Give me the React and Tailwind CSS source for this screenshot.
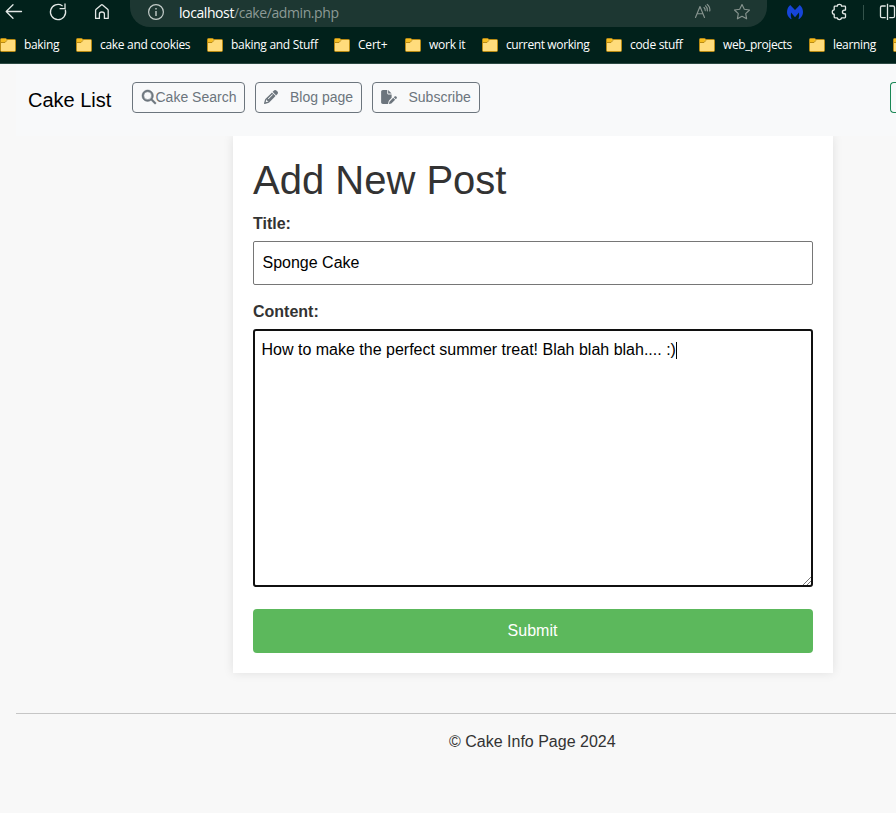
import { FaFilePen, FaMagnifyingGlass, FaPencil } from "react-icons/fa6";

const bookmarks = [
  { label: "baking", width: "w-[76px]", tracking: "tracking-[-0.35px]" },
  { label: "cake and cookies", width: "w-[131px]", tracking: "tracking-[-0.3px]" },
  { label: "baking and Stuff", width: "w-[127px]", tracking: "tracking-[-0.28px]" },
  { label: "Cert+", width: "w-[71px]", tracking: "tracking-[-0.2px]" },
  { label: "work it", width: "w-[77px]", tracking: "tracking-[-0.25px]" },
  { label: "current working", width: "w-[124px]", tracking: "tracking-[-0.38px]" },
  { label: "code stuff", width: "w-[93px]", tracking: "tracking-[-0.3px]" },
  { label: "web_projects", width: "w-[110px]", tracking: "tracking-[-0.4px]" },
  { label: "learning", width: "w-[84px]", tracking: "tracking-[-0.35px]" },
  { label: "", width: "w-[40px]", tracking: "tracking-normal" },
];

function Folder() {
  return (
    <svg className="h-[14px] w-4 shrink-0" viewBox="0 0 16 14" fill="none">
      <path d="M.5 12.5V1.5Q.5.5 1.5.5H5.5L7 1.5H14.5Q15.5 1.5 15.5 2.5V12.5Q15.5 13.5 14.5 13.5H1.5Q.5 13.5.5 12.5Z" fill="#ffdc7c" stroke="#b98a13" />
      <path d="M1 1H5.4L6.6 2 5 4H1Z" fill="#f6bd20" />
      <path d="M1 4.5H5L7 2.3" stroke="#b98a13" />
    </svg>
  );
}

function Toolbar() {
  return (
    <div className="flex h-[27px] items-start text-[#e3e8e6]">
      <svg className="h-[27px] w-[130px] shrink-0" viewBox="0 0 130 27" fill="none" stroke="currentColor" strokeWidth="1.3" strokeLinecap="round" strokeLinejoin="round">
        <path d="M21.5 11.5H6.5M13 4.8 6.2 11.5l6.8 6.8" />
        <path d="M65.4 10.2A7.6 7.6 0 1 1 62.2 5.7M65 4v4.7h-4.9" />
        <path d="M95.6 10.5Q95.6 9.8 96.2 9.3L101.2 5Q101.9 4.4 102.6 5L107.6 9.3Q108.2 9.8 108.2 10.5V18.4H104.4V14Q104.4 12 101.9 12T99.4 14V18.4H95.6Z" />
      </svg>
      <div className="flex h-[27px] w-[637px] shrink-0 items-start rounded-b-[20px] bg-[#1d3732]">
        <svg className="h-[27px] w-[49px]" viewBox="0 0 49 27" fill="none" stroke="#c4cdca" strokeWidth="1.2">
          <circle cx="26" cy="12" r="7.4" />
          <path d="M26 11v5M26 8v1.4" strokeWidth="1.4" />
        </svg>
        <div className="mt-[3px] w-[400px] whitespace-nowrap font-['Open_Sans','Noto_Sans',sans-serif] text-[14px] leading-5 tracking-[-0.41px] text-[#8c9a96]">
          <span className="text-white">localhost</span>/cake/admin.php
        </div>
        <svg className="ml-auto h-[27px] w-[90px]" viewBox="0 0 90 27" fill="none" stroke="#87948f" strokeWidth="1.15" strokeLinecap="round" strokeLinejoin="round">
          <path d="M18.5 17.5 23 6.5 27.5 17.5M20.2 13.7H25.9M27 7.5Q28.3 8.7 28.2 10.6M28.5 5.8Q30.9 7.9 30.4 11M30.2 4.4Q33.4 7.3 32.8 11" />
          <path d="m65 4.5 2.3 4.8 5.2.7-3.8 3.6.9 5.2-4.6-2.5-4.6 2.5.9-5.2-3.8-3.6 5.2-.7Z" />
        </svg>
      </div>
      <svg className="h-[27px] w-[129px] shrink-0" viewBox="767 0 129 27" fill="none" stroke="currentColor" strokeWidth="1.3" strokeLinejoin="round">
        <path d="M790.4 18.8Q787 16 787 12 787.1 7.6 790.2 5L795 10 799.8 5Q802.9 7.6 803 12 803 16 799.6 18.8L798.4 19.2Q799.7 16 799 12.4L795 17.2 791 12.4Q790.3 16 791.6 19.2Z" fill="#1645d9" stroke="none" />
        <path d="M835 6.2H837.3Q837.3 4.4 839.4 4.4T841.5 6.2H844.8Q845.5 6.2 845.5 7V10Q842.4 10 842.4 12T845.5 14V17Q845.5 17.8 844.8 17.8H841.5Q841.5 19.6 839.4 19.6T837.3 17.8H835Q834.2 17.8 834.2 17V14.2Q832.3 14.2 832.3 12T834.2 9.8V7Q834.2 6.2 835 6.2Z" />
        <path d="M863.5 5v15" stroke="#34534b" strokeWidth="1" />
        <path d="M885.7 6H882Q880.5 6 880.5 7.5V16.2Q880.5 17.7 882 17.7H885.7M887.5 3.8V20M889.3 6H893Q894.5 6 894.5 7.5V16.2Q894.5 17.7 893 17.7H889.3" />
      </svg>
    </div>
  );
}

function BookmarkBar() {
  return (
    <div className="flex h-9 items-center overflow-hidden">
      {bookmarks.map((b, i) => (
        <div key={i} className={`flex shrink-0 items-center gap-2 whitespace-nowrap ${b.width} ${b.tracking}`}>
          <Folder />
          <span className="font-['Open_Sans','Noto_Sans',sans-serif] text-[12px] leading-4 text-white">{b.label}</span>
        </div>
      ))}
    </div>
  );
}

const navButton = "flex h-[31px] shrink-0 items-center whitespace-nowrap rounded border border-[#6c757d] pl-2 text-[14px] leading-[21px] text-[#6c757d]";

export default function App() {
  return (
    <div className="h-[813px] w-full overflow-hidden bg-[#f8f8f8] font-['Liberation_Sans',Arial,sans-serif] text-[16px] leading-6 text-[#333]">
      <header className="h-16 overflow-hidden border-b border-[#2c4a43] bg-[#01211b]">
        <Toolbar />
        <BookmarkBar />
      </header>
      <nav className="ml-4 flex h-[72px] items-start bg-[#f8f9fa] pl-3 pt-[18px]">
        <div className="mt-[3px] w-[104px] shrink-0 whitespace-nowrap text-[20px] leading-[30px] text-black">Cake List</div>
        <div className="flex gap-[10px]">
          <button className={`${navButton} w-[113px]`}>
            <FaMagnifyingGlass className="mb-px ml-[0.5px] size-[14px] shrink-0 overflow-visible" stroke="currentColor" strokeWidth="20" />Cake Search
          </button>
          <button className={`${navButton} w-[107px]`}>
            <FaPencil className="mb-px mr-3 size-[14px] shrink-0" />Blog page
          </button>
          <button className={`${navButton} w-[108px]`}>
            <FaFilePen className="mb-px mr-[11.5px] h-[14px] w-4 shrink-0" />Subscribe
          </button>
        </div>
        <div className="ml-auto h-[31px] w-[6px] rounded-l border border-r-0 border-[#198754]" />
      </nav>
      <main className="ml-[233px] flex h-[537px] w-[600px] flex-col bg-white px-5 pt-5 shadow-[0_0_10px_rgba(0,0,0,0.1)] [clip-path:inset(0_-20px_-20px_-20px)]">
        <h1 className="mb-2 text-[40px] leading-12">Add New Post</h1>
        <label className="h-[29px] shrink-0 font-bold leading-[23px]">Title:</label>
        <input className="h-11 shrink-0 rounded-[2px] border border-[#767676] bg-white px-[8.5px] text-black outline-none" defaultValue="Sponge Cake" />
        <label className="mt-[15px] h-[29px] shrink-0 font-bold">Content:</label>
        <div className="relative h-[258px] shrink-0 rounded-[3px] border-2 border-[#101010] bg-white px-[6.5px] pt-[7px] text-black">
          <span>How to make the perfect summer treat! Blah blah blah.... :)</span>
          <span className="inline-block h-[17px] w-px bg-black align-[-4px]" />
          <svg className="absolute bottom-0 right-0 size-2" viewBox="0 0 8 8" stroke="#555" strokeWidth="0.8">
            <path d="M0 8 8 0M4 8 8 4" />
          </svg>
        </div>
        <button className="mt-[22px] h-11 shrink-0 rounded bg-[#5cb85c] pr-px text-white">Submit</button>
      </main>
      <footer className="ml-4 mt-10 border-t border-[#c6c6c6] pl-[433px] pt-4">© Cake Info Page 2024</footer>
    </div>
  );
}
